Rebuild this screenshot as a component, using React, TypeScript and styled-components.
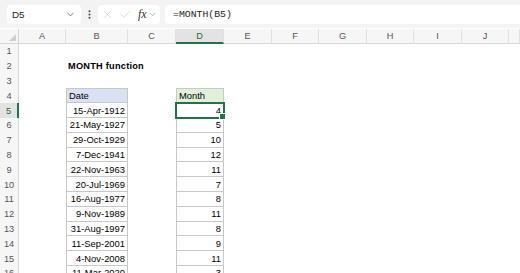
import React from "react";
import styled, { createGlobalStyle, css } from "styled-components";
import { ChevronDown, EllipsisVertical, X, Check } from "lucide-react";

const Global = createGlobalStyle`
  html, body { margin: 0; padding: 0; background: #ffffff; }
  body { font-family: "Liberation Sans", Arial, sans-serif; width: 520px; height: 273px; overflow: hidden; }
`;

const Page = styled.div`
  display: flex;
  flex-direction: column;
  width: 520px;
  height: 273px;
  overflow: hidden;
`;

const Toolbar = styled.div`
  display: flex;
  align-items: center;
  height: 28px;
  padding: 0 0 0 7px;
  background: #f3f3f3;
  box-sizing: border-box;
  flex-shrink: 0;
`;

const NameBox = styled.div`
  display: flex;
  align-items: center;
  justify-content: space-between;
  width: 74px;
  height: 19px;
  padding: 0 5px 0 5px;
  box-sizing: border-box;
  background: #ffffff;
  border-radius: 4px;
  font-size: 9.8px;
  color: #222;
  svg { color: #555; }
`;

const Dots = styled.div`
  display: flex;
  align-items: center;
  justify-content: center;
  width: 17px;
  color: #444;
`;

const FnBox = styled.div`
  display: flex;
  align-items: center;
  width: 62px;
  height: 19px;
  padding: 0 0 0 3px;
  box-sizing: border-box;
  background: #ffffff;
  border-radius: 4px;
  gap: 5px;
  color: #c4c4c4;
`;

const Fx = styled.span`
  font-family: "Liberation Serif", "Times New Roman", serif;
  font-style: italic;
  font-size: 12px;
  color: #333;
  margin-left: 1px;
  display: flex;
  align-items: center;
  svg { color: #777; margin-left: 1px; }
`;

const FormulaBox = styled.div`
  flex: 1;
  height: 19px;
  margin-left: 5px;
  display: flex;
  align-items: center;
  padding-left: 8px;
  background: #ffffff;
  border-radius: 4px 0 0 4px;
  font-family: "Liberation Mono", "Courier New", monospace;
  font-size: 9.8px;
  color: #222;
`;

const Gap = styled.div`
  height: 1px;
  background: #ffffff;
  flex-shrink: 0;
`;

const Sheet = styled.div`
  display: grid;
  grid-template-columns: 19px 47px 62px 48px 48px 48px 47px 48px 47px 48px 47px 1fr;
  grid-template-rows: 15px repeat(16, 14.8px);
  background: #ffffff;
`;

const ColHead = styled.div<{ $active?: boolean }>`
  display: flex;
  align-items: center;
  justify-content: center;
  background: ${(p) => (p.$active ? "#e3e3e3" : "#f6f6f6")};
  border-right: 1px solid #e0e0e0;
  border-bottom: ${(p) => (p.$active ? "2px solid #217346" : "1px solid #d6d6d6")};
  box-sizing: border-box;
  font-size: 9.2px;
  color: ${(p) => (p.$active ? "#1d6b3f" : "#555555")};
`;

const Corner = styled.div`
  position: relative;
  background: #f6f6f6;
  border-right: 1px solid #d6d6d6;
  border-bottom: 1px solid #d6d6d6;
  box-sizing: border-box;
  &::after {
    content: "";
    position: absolute;
    right: 2px;
    bottom: 2px;
    width: 0;
    height: 0;
    border-left: 7px solid transparent;
    border-bottom: 7px solid #cfcfcf;
  }
`;

const RowHead = styled.div<{ $active?: boolean }>`
  display: flex;
  align-items: center;
  justify-content: center;
  background: ${(p) => (p.$active ? "#e3e3e3" : "#f6f6f6")};
  border-right: ${(p) => (p.$active ? "2px solid #217346" : "1px solid #d6d6d6")};
  box-sizing: border-box;
  font-size: 9.2px;
  color: ${(p) => (p.$active ? "#1d6b3f" : "#555555")};
`;

type Kind = "none" | "head-blue" | "head-green" | "body";

const Cell = styled.div<{ $kind: Kind; $align?: "left" | "right"; $bold?: boolean; $active?: boolean }>`
  position: relative;
  display: flex;
  align-items: center;
  justify-content: ${(p) => (p.$align === "right" ? "flex-end" : "flex-start")};
  padding: 0 2px;
  box-sizing: border-box;
  white-space: nowrap;
  overflow: visible;
  font-size: ${(p) => (p.$bold ? "9.2px" : "9.4px")};
  font-weight: ${(p) => (p.$bold ? 700 : 400)};
  letter-spacing: ${(p) => (p.$bold ? "0.25px" : "0")};
  color: #000000;
  ${(p) =>
    p.$kind !== "none" &&
    css`
      border-left: 1px solid #c8c8c8;
      border-right: 1px solid #c8c8c8;
      border-bottom: 1px solid #c8c8c8;
    `}
  ${(p) => p.$kind === "head-blue" && css`background: #d9e1f2; border-top: 1px solid #c8c8c8;`}
  ${(p) => p.$kind === "head-green" && css`background: #e2efda; border-top: 1px solid #c8c8c8;`}
  ${(p) =>
    p.$active &&
    css`
      outline: 2px solid #217346;
      outline-offset: -1px;
      z-index: 1;
    `}
`;

const Handle = styled.span`
  position: absolute;
  right: -3px;
  bottom: -3px;
  width: 5px;
  height: 5px;
  background: #217346;
  border: 1px solid #ffffff;
  box-sizing: content-box;
  z-index: 2;
`;

const cols = ["A", "B", "C", "D", "E", "F", "G", "H", "I", "J", "K"];

const data: [string, string][] = [
  ["15-Apr-1912", "4"],
  ["21-May-1927", "5"],
  ["29-Oct-1929", "10"],
  ["7-Dec-1941", "12"],
  ["22-Nov-1963", "11"],
  ["20-Jul-1969", "7"],
  ["16-Aug-1977", "8"],
  ["9-Nov-1989", "11"],
  ["31-Aug-1997", "8"],
  ["11-Sep-2001", "9"],
  ["4-Nov-2008", "11"],
  ["11-Mar-2020", "3"],
];

function cellFor(row: number, col: string) {
  const key = `${col}${row}`;
  if (row === 2 && col === "B") {
    return <Cell key={key} $kind="none" $bold>MONTH function</Cell>;
  }
  if (row === 4 && col === "B") {
    return <Cell key={key} $kind="head-blue">Date</Cell>;
  }
  if (row === 4 && col === "D") {
    return <Cell key={key} $kind="head-green">Month</Cell>;
  }
  if (row >= 5 && (col === "B" || col === "D")) {
    const d = data[row - 5];
    if (col === "B") {
      return <Cell key={key} $kind="body" $align="right">{d[0]}</Cell>;
    }
    const active = row === 5;
    return (
      <Cell key={key} $kind="body" $align="right" $active={active}>
        {d[1]}
        {active && <Handle />}
      </Cell>
    );
  }
  return <Cell key={key} $kind="none" />;
}

export default function App() {
  const rows = Array.from({ length: 16 }, (_, i) => i + 1);
  return (
    <Page>
      <Global />
      <Toolbar>
        <NameBox>
          <span>D5</span>
          <ChevronDown size={11} strokeWidth={1.6} />
        </NameBox>
        <Dots>
          <EllipsisVertical size={11} strokeWidth={2.4} />
        </Dots>
        <FnBox>
          <X size={13} strokeWidth={1.1} />
          <Check size={13} strokeWidth={1.1} />
          <Fx>
            fx
            <ChevronDown size={9} strokeWidth={1.4} />
          </Fx>
        </FnBox>
        <FormulaBox>=MONTH(B5)</FormulaBox>
      </Toolbar>
      <Gap />
      <Sheet>
        <Corner />
        {cols.map((c) => (
          <ColHead key={c} $active={c === "D"}>
            {c === "K" ? "" : c}
          </ColHead>
        ))}
        {rows.map((r) => (
          <React.Fragment key={r}>
            <RowHead $active={r === 5}>{r}</RowHead>
            {cols.map((c) => cellFor(r, c))}
          </React.Fragment>
        ))}
      </Sheet>
    </Page>
  );
}
